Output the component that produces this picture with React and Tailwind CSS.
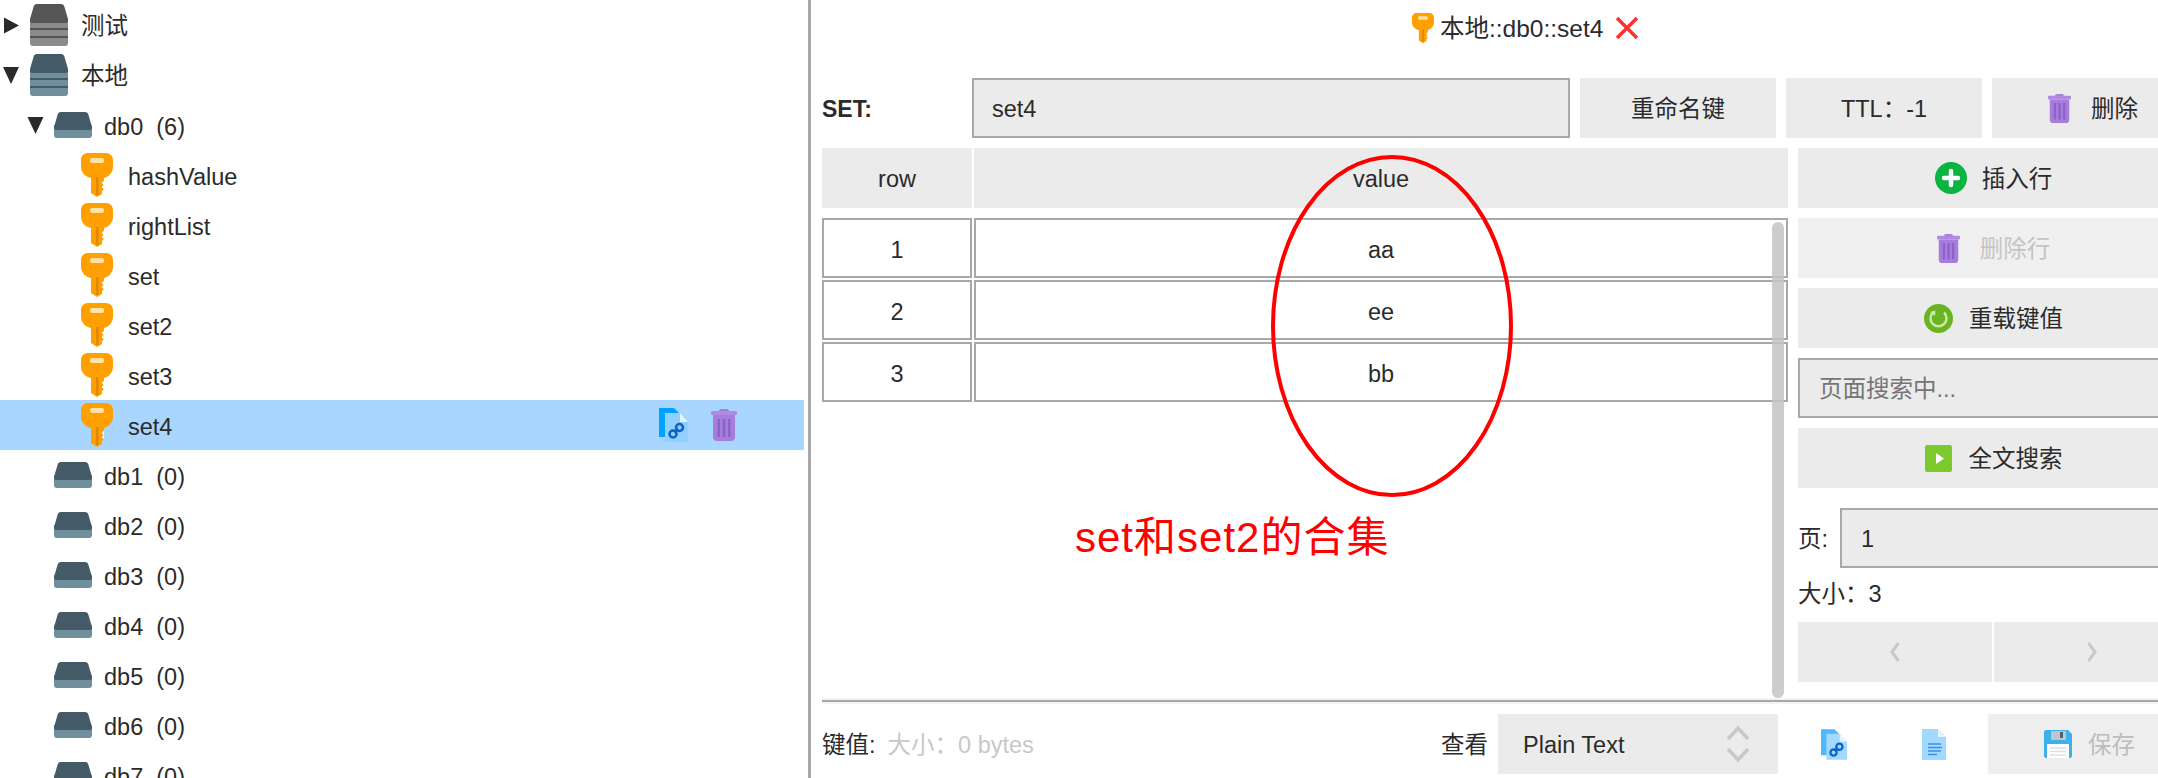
import React from "react";

const FONT = "[font-family:'Liberation_Sans','Noto_Sans_CJK_SC',sans-serif]";

const Label = ({ className = "", children }) => (
  <span className={`mt-[3px] ${className}`}>{children}</span>
);

const Triangle = ({ down, className }) => (
  <svg viewBox="0 0 16 17" className={className}>
    {down ? (
      <path d="M0 0H16L8 17Z" fill="#2a2a2a" />
    ) : (
      <path d="M0 0L16 8.5L0 17Z" fill="#2a2a2a" />
    )}
  </svg>
);

const KeyIcon = ({ className }) => (
  <svg viewBox="0 0 32 44" className={className}>
    <path
      d="M7 0H25C29 0 32 3 32 7V14C32 20 27 24 23 25V36L21 38V41L16 44L10 40V25C5 24 0 20 0 14V7C0 3 3 0 7 0Z"
      fill="#ff9f00"
    />
    <path d="M23 28L21 30L23 32L21 34L23 36" fill="#fff" stroke="#fff" strokeWidth="0.8" />
    <rect x="9" y="5" width="14" height="5" rx="2" fill="#ffe2a8" />
    <rect x="15" y="24" width="2.5" height="18" fill="#e08600" />
  </svg>
);

const DbStack = ({ dark, light }) => (
  <svg viewBox="0 0 38 42" className="h-[42px] w-[38px] shrink-0">
    <rect x="0" y="16" width="38" height="26" rx="3" fill={light} />
    <rect x="0" y="24" width="38" height="2" fill={dark} />
    <rect x="0" y="32" width="38" height="2" fill={dark} />
    <path d="M7 0H31C33 0 34 1 34.500 3L38 15V17C38 18 37 19 36 19H2C1 19 0 18 0 17V15L3.500 3C4 1 5 0 7 0Z" fill={dark} />
  </svg>
);

const DbIcon = () => (
  <svg viewBox="0 0 38 26" className="h-[26px] w-[38px] shrink-0">
    <rect x="0" y="12" width="38" height="14" rx="3" fill="#6f8f9c" />
    <path d="M7 0H31C33 0 34 1 34.500 3L38 15V16C38 17 37 18 36 18H2C1 18 0 17 0 16V15L3.500 3C4 1 5 0 7 0Z" fill="#445a66" />
  </svg>
);

const TrashIcon = ({ className }) => (
  <svg viewBox="0 0 26 32" preserveAspectRatio="none" className={className}>
    <rect x="8" y="0" width="10" height="4" rx="2" fill="#a77fdb" />
    <rect x="0" y="2" width="26" height="4" rx="1" fill="#b08ae0" />
    <path d="M2 6H24V28C24 30.500 22.500 32 20 32H6C3.500 32 2 30.500 2 28Z" fill="#a67cdc" />
    <rect x="6.500" y="10" width="2.500" height="18" fill="#8a62c8" />
    <rect x="11.800" y="10" width="2.500" height="18" fill="#8a62c8" />
    <rect x="17" y="10" width="2.500" height="18" fill="#8a62c8" />
  </svg>
);

const LinkFileIcon = ({ back, front, className }) => (
  <svg viewBox="0 0 29 34" className={className}>
    <path d="M0 0H15L20 5V29H0Z" fill={back} />
    <path d="M6 5H21L29 14V34H6Z" fill={front} />
    <path d="M21 5L29 14H21Z" fill="#e4f4ff" />
    <g fill="none" stroke="#0b62c4" strokeWidth="2.500">
      <circle cx="20.500" cy="19.500" r="3.500" />
      <circle cx="14" cy="26" r="3.500" />
      <path d="M15.500 24.500L19 21" />
    </g>
  </svg>
);

const DocIcon = ({ className }) => (
  <svg viewBox="0 0 24 31" className={className}>
    <path d="M0 0H16L24 8V31H0Z" fill="#a3d8ff" />
    <path d="M16 0L24 8H16Z" fill="#e2f3ff" />
    <g stroke="#2f8fe6" strokeWidth="1.400">
      <path d="M6 15H19" />
      <path d="M6 18.500H20" />
      <path d="M6 22H19" />
      <path d="M6 25.500H15" />
    </g>
  </svg>
);

const SaveIcon = ({ className }) => (
  <svg viewBox="0 0 28 28" className={className}>
    <path d="M2 0H24L28 4V26C28 27 27 28 26 28H2C1 28 0 27 0 26V2C0 1 1 0 2 0Z" fill="#3db2ea" />
    <rect x="7" y="1" width="15" height="9" rx="1" fill="#bcc8d0" />
    <rect x="16" y="2" width="3" height="6" fill="#556068" />
    <rect x="3" y="14" width="22" height="14" fill="#fff" />
    <g stroke="#d6e0e6" strokeWidth="1.500">
      <path d="M6 18H22" />
      <path d="M6 21.500H22" />
      <path d="M6 25H22" />
    </g>
  </svg>
);

const PlusIcon = () => (
  <svg viewBox="0 0 32 32" className="h-8 w-8 shrink-0">
    <circle cx="16" cy="16" r="16" fill="#0bb33f" />
    <path d="M16 9V23M9 16H23" stroke="#fff" strokeWidth="4.500" strokeLinecap="round" />
  </svg>
);

const ReloadIcon = () => (
  <svg viewBox="0 0 29 29" className="h-[29px] w-[29px] shrink-0">
    <circle cx="14.500" cy="14.500" r="14.500" fill="#6ab422" />
    <path d="M9 8.500A8 8 0 1 0 20 8.500" fill="none" stroke="#c9e8ab" strokeWidth="2.500" />
    <path d="M6 8L11.500 6.500L11 12Z" fill="#c9e8ab" />
  </svg>
);

const PlayIcon = () => (
  <svg viewBox="0 0 27 27" className="h-[27px] w-[27px] shrink-0">
    <rect width="27" height="27" rx="2" fill="#7cc92e" />
    <path d="M11 8L19 13.500L11 19Z" fill="#fff" />
  </svg>
);

const CloseIcon = () => (
  <svg viewBox="0 0 24 22" className="ml-3 mt-[5px] h-[22px] w-6 shrink-0">
    <path d="M2 1L22 21M22 1L2 21" stroke="#ff3030" strokeWidth="3.500" />
  </svg>
);

const TreeRow = ({ className = "", children }) => (
  <div className={`flex h-[50px] shrink-0 items-center ${className}`}>{children}</div>
);

const KeyRow = ({ name, active }) => (
  <TreeRow className={`pl-[81px] ${active ? "bg-[#a9d6ff]" : ""}`}>
    <KeyIcon className="h-[44px] w-8 shrink-0" />
    <span className="ml-[15px] mt-[5px]">{name}</span>
    {active && (
      <div className="ml-auto mr-[67px] flex items-center gap-[23px]">
        <LinkFileIcon back="#00a2ff" front="#8fd0ff" className="h-[34px] w-[29px]" />
        <TrashIcon className="h-8 w-[26px]" />
      </div>
    )}
  </TreeRow>
);

const DbRow = ({ name, count, open }) => (
  <TreeRow className={open ? "pl-[27px]" : "pl-[54px]"}>
    {open && <Triangle down className="mr-[10px] h-[17px] w-[17px]" />}
    <DbIcon />
    <span className="ml-3 mt-[5px] whitespace-pre">{`${name}  (${count})`}</span>
  </TreeRow>
);

const Btn = ({ className = "", disabled, children }) => (
  <div
    className={`flex h-[60px] shrink-0 items-center justify-center ${
      disabled ? "bg-[#f0f0f0] text-[#c4c4c4]" : "bg-[#ebebeb]"
    } ${className}`}
  >
    {children}
  </div>
);

const TableRow = ({ row, value }) => (
  <div className="flex h-[60px] gap-[2px]">
    <div className="flex w-[150px] items-center justify-center border-2 border-[#a8a8a8] pt-[5px]">{row}</div>
    <div className="flex flex-1 items-center justify-center border-2 border-[#a8a8a8] pt-[5px]">{value}</div>
  </div>
);

export default function App() {
  const keys = ["hashValue", "rightList", "set", "set2", "set3"];
  const emptyDbs = ["db1", "db2", "db3", "db4", "db5", "db6", "db7"];

  return (
    <div className={`flex h-[778px] w-[2158px] overflow-hidden bg-white text-[23.5px] leading-none text-[#2b2b2b] ${FONT}`}>
      {/* key tree */}
      <div className="flex w-[804px] shrink-0 flex-col overflow-hidden">
        <TreeRow className="pl-1">
          <Triangle className="mr-[11px] h-[17px] w-[15px]" />
          <DbStack dark="#555555" light="#8b8b8b" />
          <Label className="ml-[13px]">测试</Label>
        </TreeRow>
        <TreeRow className="pl-[3px]">
          <Triangle down className="mr-[11px] h-[17px] w-4" />
          <DbStack dark="#445a66" light="#6f8f9c" />
          <Label className="ml-[13px]">本地</Label>
        </TreeRow>
        <DbRow name="db0" count={6} open />
        {keys.map((k) => (
          <KeyRow key={k} name={k} />
        ))}
        <KeyRow name="set4" active />
        {emptyDbs.map((d) => (
          <DbRow key={d} name={d} count={0} />
        ))}
      </div>

      {/* splitter */}
      <div className="ml-1 w-[3px] shrink-0 bg-[#a8a8a8]" />

      {/* value panel */}
      <div className="relative w-[1428px] shrink-0 pl-[11px]">
        <div className="flex h-[78px] items-start pl-[590px] pt-[12px]">
          <KeyIcon className="h-8 w-[22px] shrink-0" />
          <span className="ml-[6px] mt-[5px] whitespace-nowrap text-[24.5px]">本地::db0::set4</span>
          <CloseIcon />
        </div>

        <div className="flex h-[60px] items-center">
          <span className="w-[150px] pt-[2px] text-[23px] font-bold">SET:</span>
          <div className="flex h-[60px] w-[598px] items-center border-2 border-[#a8a8a8] bg-[#ebebeb] pl-[18px]">
            <Label>set4</Label>
          </div>
          <Btn className="ml-[10px] w-[196px]"><Label>重命名键</Label></Btn>
          <Btn className="ml-[10px] w-[196px]"><Label>TTL：-1</Label></Btn>
          <Btn className="ml-[10px] w-[202px]">
            <TrashIcon className="mr-[20px] h-[29px] w-[23px]" />
            <Label>删除</Label>
          </Btn>
        </div>

        <div className="mt-[10px] flex h-[550px] w-[1368px]">
          <div className="relative w-[966px] shrink-0">
            <div className="flex h-[60px] gap-[2px]">
              <div className="flex w-[150px] items-center justify-center bg-[#ebebeb]"><Label>row</Label></div>
              <div className="flex flex-1 items-center justify-center bg-[#ebebeb]"><Label>value</Label></div>
            </div>
            <div className="mt-[10px] flex flex-col gap-[2px]">
              <TableRow row="1" value="aa" />
              <TableRow row="2" value="ee" />
              <TableRow row="3" value="bb" />
            </div>
            <div className="absolute bottom-0 right-[4px] top-[74px] w-3 rounded-full bg-[#c4c4c4]/85" />
          </div>

          <div className="ml-[10px] flex w-[391px] shrink-0 flex-col">
            <div className="flex flex-col gap-[10px]">
              <Btn>
                <PlusIcon />
                <Label className="ml-[15px]">插入行</Label>
              </Btn>
              <Btn disabled>
                <TrashIcon className="mr-[20px] h-[29px] w-[23px]" />
                <Label>删除行</Label>
              </Btn>
              <Btn>
                <ReloadIcon />
                <Label className="ml-4">重载键值</Label>
              </Btn>
              <div className="flex h-[60px] items-center border-2 border-[#a8a8a8] bg-[#ebebeb] pl-[19px] text-[#757575]">
                <Label>页面搜索中...</Label>
              </div>
              <Btn>
                <PlayIcon />
                <Label className="ml-[17px]">全文搜索</Label>
              </Btn>
            </div>
            <div className="mt-5 flex h-[60px] items-center">
              <Label className="w-[42px] shrink-0">页:</Label>
              <div className="flex h-[60px] flex-1 items-center border-2 border-[#a8a8a8] bg-[#ebebeb] pl-[19px]">
                <Label>1</Label>
              </div>
            </div>
            <div className="flex h-[54px] items-center">大小：3</div>
            <div className="flex gap-[2px]">
              <Btn className="w-[194px]">
                <svg viewBox="0 0 10 20" className="h-5 w-[10px]">
                  <path d="M8.500 1L2 10L8.500 19" fill="none" stroke="#c8c8c8" strokeWidth="3" />
                </svg>
              </Btn>
              <Btn className="flex-1">
                <svg viewBox="0 0 10 20" className="h-5 w-[10px]">
                  <path d="M1.500 1L8 10L1.500 19" fill="none" stroke="#c8c8c8" strokeWidth="3" />
                </svg>
              </Btn>
            </div>
          </div>
        </div>

        {/* horizontal splitter */}
        <div className="flex h-[6px] items-center bg-[#f4f4f4]">
          <div className="h-[2px] w-full bg-[#a8a8a8]" />
        </div>

        <div className="mt-[10px] flex h-[60px] w-[1368px] items-center">
          <Label>键值:</Label>
          <Label className="ml-[12px] text-[#c8c8c8]">大小：0 bytes</Label>
          <Label className="ml-auto">查看</Label>
          <div className="ml-[10px] flex h-[60px] w-[280px] shrink-0 items-center justify-between bg-[#ebebeb] pl-[25px] pr-[28px]">
            <Label>Plain Text</Label>
            <svg viewBox="0 0 24 38" className="h-[38px] w-6">
              <path d="M2 14L12 3L22 14M2 24L12 35L22 24" fill="none" stroke="#c8c8c8" strokeWidth="3.500" />
            </svg>
          </div>
          <div className="flex w-[210px] shrink-0 items-center pl-[43px]">
            <LinkFileIcon back="#4db8ff" front="#a3d8ff" className="h-[31px] w-[26px] shrink-0" />
            <DocIcon className="ml-[75px] h-[31px] w-6 shrink-0" />
          </div>
          <Btn disabled className="w-[202px] !justify-start !bg-[#eeeeee] pl-[56px]">
            <SaveIcon className="h-7 w-7 shrink-0" />
            <Label className="ml-4 text-[#bdbdbd]">保存</Label>
          </Btn>
        </div>

        {/* hand-drawn annotation over the table */}
        <svg viewBox="0 0 244 344" className="pointer-events-none absolute left-[459px] top-[154px] h-[344px] w-[244px]">
          <ellipse cx="122" cy="172" rx="119" ry="169" fill="none" stroke="#ff0000" strokeWidth="4" />
        </svg>
        <span className="pointer-events-none absolute left-[264px] top-[517px] whitespace-nowrap text-[42px] tracking-[1px] text-[#ff0000]">
          set和set2的合集
        </span>
      </div>
    </div>
  );
}
